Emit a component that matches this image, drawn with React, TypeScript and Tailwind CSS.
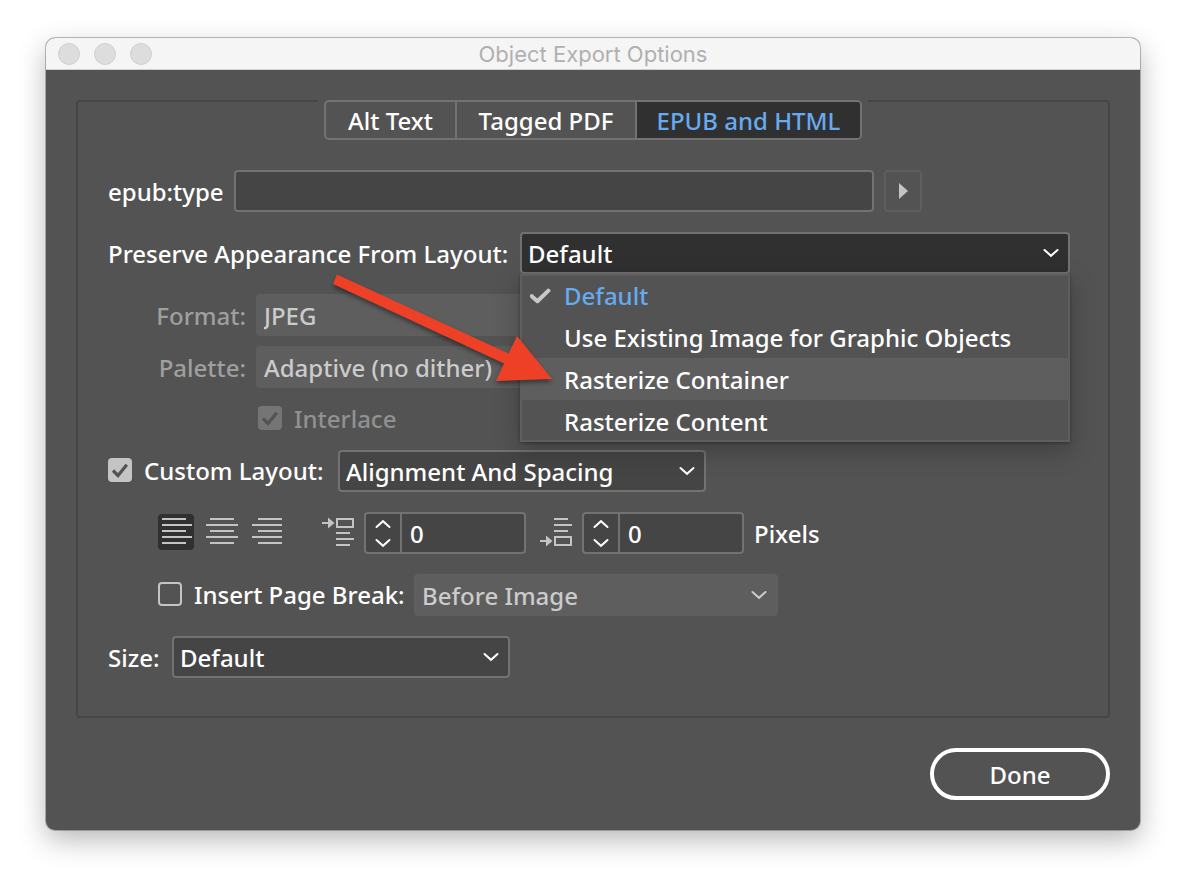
import { useState, type ReactNode } from "react";

function Chevron({ up = false, className = "" }: { up?: boolean; className?: string }) {
  return (
    <svg className={className} width="16" height="10" viewBox="0 0 16 10" fill="none" aria-hidden="true">
      <path
        d={up ? "M1.5 8 8 2.2 14.5 8" : "M1.5 2 8 7.8 14.5 2"}
        stroke="currentColor"
        strokeWidth="2"
        strokeLinecap="round"
      />
    </svg>
  );
}

type DropDownProps = {
  id: string;
  options: string[];
  disabled?: boolean;
  className: string;
};

function DropDown({ id, options, disabled = false, className }: DropDownProps) {
  const look = disabled
    ? "border-[#5e5e5e] bg-[#5e5e5e] text-[#cbcbcb]"
    : "border-[#727272] bg-[#454545] text-white";
  return (
    <div className={`relative min-w-0 ${className}`}>
      <select
        id={id}
        disabled={disabled}
        className={`h-[42px] w-full appearance-none rounded-[4px] border-2 pt-0.5 pr-9 pl-1.5 opacity-100 outline-none ${look}`}
      >
        {options.map((option) => (
          <option key={option}>{option}</option>
        ))}
      </select>
      <Chevron
        className={`pointer-events-none absolute top-4 right-[11px] ${disabled ? "text-[#cbcbcb]" : "text-white"}`}
      />
    </div>
  );
}

type TickBoxProps = {
  id: string;
  checked?: boolean;
  disabled?: boolean;
  children: ReactNode;
  className?: string;
};

function TickBox({ id, checked = false, disabled = false, children, className = "" }: TickBoxProps) {
  return (
    <div className={`flex shrink-0 items-center gap-3 ${className}`}>
      <span className="mb-0.5 grid size-6 shrink-0 text-[#535353]">
        <input
          id={id}
          type="checkbox"
          defaultChecked={checked}
          disabled={disabled}
          className="peer col-start-1 row-start-1 size-6 appearance-none rounded-[4px] border-2 border-[#c4c4c4] checked:bg-[#c4c4c4] disabled:border-[#757575] disabled:bg-[#757575]"
        />
        <svg
          className="pointer-events-none invisible col-start-1 row-start-1 peer-checked:visible"
          width="24"
          height="24"
          viewBox="0 0 24 24"
          fill="none"
          aria-hidden="true"
        >
          <path d="M5 12.5 10 17.5 18.8 6.8" stroke="currentColor" strokeWidth="3.2" />
        </svg>
      </span>
      <label htmlFor={id} className={`whitespace-nowrap ${disabled ? "text-[#919191]" : ""}`}>
        {children}
      </label>
    </div>
  );
}

const alignments = [
  { name: "Align left", path: "M4 5H28M4 11H34M4 17H28M4 23H34M4 29H28" },
  { name: "Align center", path: "M6 5H30M2 11H34M6 17H30M2 23H34M6 29H30" },
  { name: "Align right", path: "M8 5H32M2 11H32M8 17H32M2 23H32M8 29H32" },
];

function SpaceIcon({ after = false }: { after?: boolean }) {
  return (
    <svg width="32" height="42" viewBox="0 0 32 42" fill="none" stroke="#c4c4c4" strokeWidth="2" aria-hidden="true">
      {after ? (
        <>
          <path d="M14 7H28M14 13H32M14 19H28M0 29H7" />
          <rect x="15" y="25" width="16" height="8" />
          <path d="M6 23.5 12.5 29 6 34.5Z" fill="#c4c4c4" stroke="none" />
        </>
      ) : (
        <>
          <path d="M14 21H28M14 27H32M14 33H28M0 11H7" />
          <rect x="15" y="7" width="16" height="8" />
          <path d="M6 5.5 12.5 11 6 16.5Z" fill="#c4c4c4" stroke="none" />
        </>
      )}
    </svg>
  );
}

function Stepper({ name }: { name: string }) {
  const [value, setValue] = useState("0");
  const step = (by: number) => setValue(String(Number(value) + by));
  return (
    <div className="flex h-[42px] w-[162px] shrink-0 rounded-[4px] border-2 border-[#727272] bg-[#454545]">
      <div className="flex w-9 shrink-0 flex-col border-r-2 border-[#727272]">
        <button type="button" aria-label={`Increase ${name}`} onClick={() => step(1)} className="grid flex-1 place-items-center">
          <Chevron up />
        </button>
        <button type="button" aria-label={`Decrease ${name}`} onClick={() => step(-1)} className="grid flex-1 place-items-center">
          <Chevron />
        </button>
      </div>
      <input
        aria-label={name}
        value={value}
        onChange={(event) => setValue(event.target.value)}
        className="w-full min-w-0 bg-transparent pt-0.5 pl-2 outline-none"
      />
    </div>
  );
}

const tabs = [
  { name: "Alt Text", width: "w-[131px]" },
  { name: "Tagged PDF", width: "w-[180px]" },
  { name: "EPUB and HTML", width: "w-[223px]" },
];

const appearances = [
  "Default",
  "Use Existing Image for Graphic Objects",
  "Rasterize Container",
  "Rasterize Content",
];

export default function App() {
  const [tab, setTab] = useState("EPUB and HTML");
  const [align, setAlign] = useState("Align left");
  const [appearance, setAppearance] = useState("Default");

  return (
    <main className="min-h-screen bg-white px-[46px] pt-[38px] pb-[54px] font-['Noto_Sans',sans-serif] text-2xl font-medium text-white">
      <section className="overflow-hidden rounded-[9px] bg-[#535353] shadow-[0_0_0_1px_rgba(0,0,0,0.25),0_10px_28px_rgba(0,0,0,0.28)]">
        <header className="flex h-8 items-center border-b border-[#d0d0d0] bg-[#f5f5f5] px-3">
          <div className="flex flex-1 gap-3.5">
            {["Close", "Minimize", "Zoom"].map((name) => (
              <button
                key={name}
                type="button"
                aria-label={name}
                className="size-[22px] rounded-full border border-[#cfcfcf] bg-[#dddddd]"
              />
            ))}
          </div>
          <h1 className="font-['Inter',sans-serif] text-[22px] leading-8 font-normal text-[#b0b0b0]">
            Object Export Options
          </h1>
          <div className="flex-1" />
        </header>

        <div className="flex flex-col gap-[30px] p-[30px]">
          <div className="flex flex-col rounded-[4px] border-2 border-[#464646] pb-[38px]">
            <div className="-mt-0.5 self-center bg-[#535353] px-1.5">
              <div role="tablist" className="flex h-10 divide-x-2 divide-[#727272] overflow-hidden rounded-[5px] border-2 border-[#727272]">
                {tabs.map(({ name, width }) => (
                  <button
                    key={name}
                    type="button"
                    role="tab"
                    aria-selected={tab === name}
                    onClick={() => setTab(name)}
                    className={`${width} pt-0.5 whitespace-nowrap ${tab === name ? "bg-[#303030] text-[#66aaf0]" : ""}`}
                  >
                    {name}
                  </button>
                ))}
              </div>
            </div>

            <div className="flex flex-col gap-5 px-[30px] pt-[30px]">
              <div className="flex h-[42px] items-center gap-2.5">
                <label htmlFor="epub-type" className="w-[116px] shrink-0 pt-0.5 whitespace-nowrap">
                  epub:type
                </label>
                <input
                  id="epub-type"
                  className="h-full max-w-[640px] min-w-0 flex-1 rounded-[4px] border-2 border-[#727272] bg-[#454545] px-1.5 outline-none"
                />
                <button
                  type="button"
                  aria-label="Choose epub:type"
                  className="grid h-full w-[38px] shrink-0 place-items-center rounded-[4px] border-2 border-[#5e5e5e]"
                >
                  <svg width="10" height="16" viewBox="0 0 10 16" aria-hidden="true">
                    <path d="M1 0 10 8 1 16Z" fill="#c4c4c4" />
                  </svg>
                </button>
              </div>

              <div className="flex h-[42px] items-center gap-2.5">
                <span id="preserve-label" className="w-[402px] shrink-0 pt-0.5 whitespace-nowrap">
                  Preserve Appearance From Layout:
                </span>
                <div className="relative max-w-[550px] min-w-0 flex-1">
                  <button
                    type="button"
                    aria-haspopup="listbox"
                    aria-expanded="true"
                    aria-labelledby="preserve-label"
                    className="flex h-[42px] w-full items-center justify-between rounded-[4px] border-2 border-[#727272] bg-[#303030] pr-[9px] pl-1.5"
                  >
                    <span className="pt-0.5">{appearance}</span>
                    <Chevron />
                  </button>
                  <ul
                    role="listbox"
                    aria-labelledby="preserve-label"
                    className="absolute inset-x-0 top-full z-10 bg-[#535353] shadow-[0_8px_24px_rgba(0,0,0,0.25),0_1px_3px_rgba(0,0,0,0.3)] after:pointer-events-none after:absolute after:inset-0 after:border-2 after:border-[#5e5e5e]"
                  >
                    {appearances.map((name) => {
                      const chosen = name === appearance;
                      return (
                        <li
                          key={name}
                          role="option"
                          aria-selected={chosen}
                          onClick={() => setAppearance(name)}
                          className={`flex h-[42px] items-center gap-3 pt-0.5 pl-2.5 whitespace-nowrap ${
                            name === "Rasterize Container" ? "bg-[#5e5e5e]" : ""
                          } ${chosen ? "text-[#66aaf0]" : ""}`}
                        >
                          <svg width="22" height="18" viewBox="0 0 22 18" fill="none" className="shrink-0" aria-hidden="true">
                            {chosen && (
                              <path d="M1.8 9.2 7.4 14.2 18.4 3.6" stroke="#c8c8c8" strokeWidth="4" strokeLinecap="round" strokeLinejoin="round" />
                            )}
                          </svg>
                          {name}
                        </li>
                      );
                    })}
                  </ul>
                  <svg
                    className="pointer-events-none absolute top-9 -left-[190px] z-20 drop-shadow-[0_3px_2px_rgba(0,0,0,0.4)]"
                    width="226"
                    height="120"
                    viewBox="330 268 226 120"
                    aria-hidden="true"
                  >
                    <path d="M337 274.5 508.5 353.5 517 336 552 379 496 381 504 363.5 333 284Z" fill="#ee4027" />
                  </svg>
                </div>
              </div>

              <div className="flex flex-col gap-2.5">
                <div className="flex h-[42px] items-center gap-2.5">
                  <label htmlFor="format" className="w-[138px] shrink-0 pt-0.5 text-right text-[#9f9f9f]">
                    Format:
                  </label>
                  <DropDown id="format" options={["JPEG", "GIF", "PNG"]} disabled className="w-[368px]" />
                </div>
                <div className="flex h-[42px] items-center gap-2.5">
                  <label htmlFor="palette" className="w-[138px] shrink-0 pt-0.5 text-right text-[#9f9f9f]">
                    Palette:
                  </label>
                  <DropDown id="palette" options={["Adaptive (no dither)", "Web", "System"]} disabled className="w-[368px]" />
                </div>
                <TickBox id="interlace" checked disabled className="h-[42px] pl-[150px]">
                  Interlace
                </TickBox>
                <div className="flex h-[42px] items-center gap-2.5">
                  <TickBox id="custom-layout" checked className="w-[220px]">
                    Custom Layout:
                  </TickBox>
                  <DropDown id="custom-layout-kind" options={["Alignment And Spacing", "Float Left", "Float Right"]} className="w-[368px]" />
                </div>
              </div>

              <div className="flex h-[42px] items-center gap-2.5 pl-[50px]">
                <div className="flex gap-2.5 pb-0.5">
                  {alignments.map(({ name, path }) => (
                    <button
                      key={name}
                      type="button"
                      aria-label={name}
                      aria-pressed={align === name}
                      onClick={() => setAlign(name)}
                      className={`size-9 shrink-0 rounded-[4px] ${align === name ? "bg-[#303030]" : ""}`}
                    >
                      <svg width="36" height="36" viewBox="0 0 36 36" aria-hidden="true">
                        <path d={path} stroke="#c4c4c4" strokeWidth="2" />
                      </svg>
                    </button>
                  ))}
                </div>
                <div className="flex items-center gap-2.5 pl-[26px]">
                  <SpaceIcon />
                  <Stepper name="Space before" />
                </div>
                <div className="flex items-center gap-2.5 pl-1">
                  <SpaceIcon after />
                  <Stepper name="Space after" />
                </div>
                <span className="pt-0.5">Pixels</span>
              </div>

              <div className="flex h-[42px] items-center gap-2.5 pl-[50px]">
                <TickBox id="page-break" className="w-[246px]">
                  Insert Page Break:
                </TickBox>
                <DropDown id="page-break-kind" options={["Before Image", "After Image"]} disabled className="w-[364px]" />
              </div>

              <div className="flex h-[42px] items-center gap-2.5">
                <label htmlFor="size" className="w-[54px] shrink-0 pt-0.5 whitespace-nowrap">
                  Size:
                </label>
                <DropDown id="size" options={["Default", "Fixed", "Relative to Text Flow"]} className="w-[338px]" />
              </div>
            </div>
          </div>

          <button type="button" className="h-[52px] w-[180px] self-end rounded-full border-4 border-white pt-0.5">
            Done
          </button>
        </div>
      </section>
    </main>
  );
}
